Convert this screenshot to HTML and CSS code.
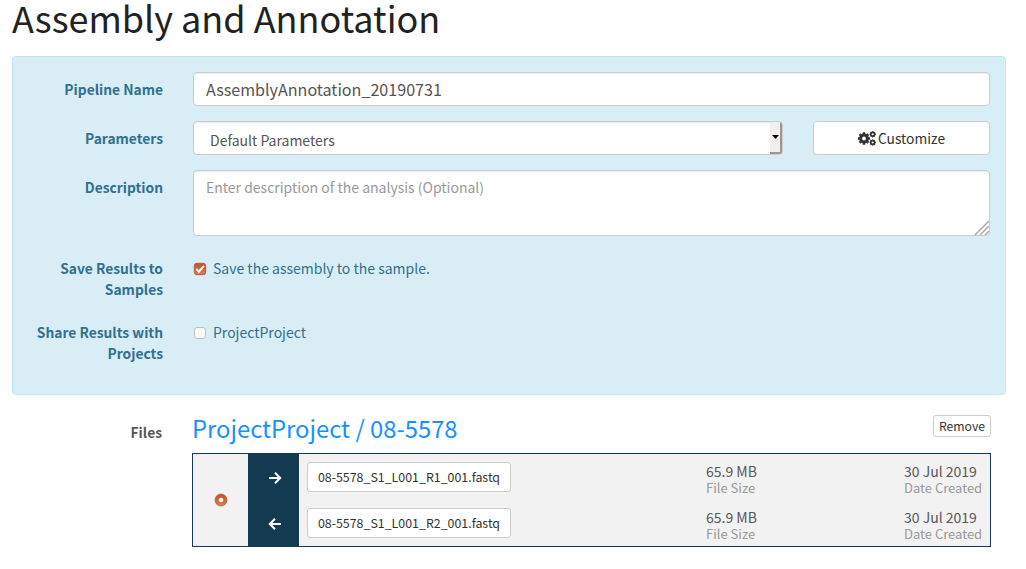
FILE: index.html
```html
<!DOCTYPE html>
<html lang="en">
<head>
<meta charset="utf-8">
<title>Assembly and Annotation</title>
<link rel="stylesheet" href="styles.css">
</head>
<body>
<main class="page">
  <h1 class="title">Assembly and Annotation</h1>
  <form class="panel">
    <div class="row row-name">
      <label class="label">Pipeline Name</label>
      <div class="control name-text">AssemblyAnnotation_20190731</div>
    </div>
    <div class="row row-params">
      <label class="label">Parameters</label>
      <div class="params">
        <div class="control select">
          <span class="select-text">Default Parameters</span>
          <span class="select-button"><svg width="7" height="4" viewBox="0 0 7 4"><path d="M0 0h7L3.5 4z" fill="#000"/></svg></span>
        </div>
        <div class="control customize">
          <svg class="cogs" width="18" height="15" viewBox="0 0 18 15" fill="none" stroke="#333">
            <circle cx="6" cy="7.5" r="3.4" stroke-width="3"/>
            <path d="M6 1.300v2M6 11.700v2M-.1 7.500h2M10.100 7.500h2M1.700 3.200L3 4.500M10.300 3.200L9 4.500M1.700 11.800L3 10.500M10.300 11.800L9 10.500" stroke-width="2.600"/>
            <circle cx="14.700" cy="3.300" r="1.900" stroke-width="1.700"/>
            <path d="M14.700 .2v1M14.700 5.400v1M11.600 3.300h1M16.800 3.300h1M12.500 1.100l.7.7M16.900 1.100l-.7.7M12.500 5.500l.7-.7M16.900 5.500l-.7-.7" stroke-width="1.300"/>
            <circle cx="14.700" cy="11.500" r="1.900" stroke-width="1.700"/>
            <path d="M14.700 8.400v1M14.700 13.600v1M11.600 11.500h1M16.800 11.500h1M12.500 9.300l.7.7M16.900 9.300l-.7.7M12.500 13.700l.7-.7M16.900 13.700l-.7-.7" stroke-width="1.300"/>
          </svg>
          <span>Customize</span>
        </div>
      </div>
    </div>
    <div class="row row-desc">
      <label class="label">Description</label>
      <div class="control textarea">
        <span class="placeholder">Enter description of the analysis (Optional)</span>
        <svg class="grip" width="15" height="15" viewBox="0 0 15 15"><path d="M1 15L15 1M6 15l9-9M11 15l4-4" stroke="#aaa" stroke-width="1.500"/></svg>
      </div>
    </div>
    <div class="row row-save">
      <label class="label">Save Results to Samples</label>
      <div class="check">
        <svg width="14" height="14" viewBox="0 0 14 14"><defs><linearGradient id="fill" x2="0" y2="1"><stop offset="0" stop-color="#ce4b21"/><stop offset="1" stop-color="#dd7c52"/></linearGradient></defs><rect x="1.300" y="1.300" width="11.400" height="11.400" rx="2.500" fill="url(#fill)" stroke="#a9583c" stroke-width=".9"/><path d="M3.300 7l2.600 2.700L11 3.900" fill="none" stroke="#fff" stroke-width="2"/></svg>
        <span class="save-text">Save the assembly to the sample.</span>
      </div>
    </div>
    <div class="row row-share">
      <label class="label">Share Results with Projects</label>
      <div class="check">
        <svg width="14" height="14" viewBox="0 0 14 14"><rect x="1.500" y="1.500" width="11" height="11" rx="2.500" fill="#f8f8f8" stroke="#c2c0be"/></svg>
        <span class="project-text">ProjectProject</span>
      </div>
    </div>
  </form>
  <section class="files">
    <div class="label files-label">Files</div>
    <div class="files-body">
      <header class="files-head">
        <h2 class="sample">ProjectProject / 08-5578</h2>
        <button class="remove" type="button">Remove</button>
      </header>
      <div class="pair">
        <div class="pick">
          <svg width="14" height="14" viewBox="0 0 14 14"><circle cx="7" cy="7" r="6" fill="url(#fill)" stroke="#b4623f" stroke-width=".8"/><circle cx="7" cy="7" r="2.300" fill="#fff"/></svg>
        </div>
        <div class="arrows">
          <svg width="14" height="14" viewBox="0 0 14 14"><path d="M1 7h11M7 1.800L12.200 7 7 12.200" fill="none" stroke="#fff" stroke-width="2"/></svg>
          <svg width="14" height="14" viewBox="0 0 14 14"><path d="M13 7H2M7 1.800L1.800 7 7 12.200" fill="none" stroke="#fff" stroke-width="2"/></svg>
        </div>
        <div class="list">
          <div class="file">
            <div class="cell"><span class="filename">08-5578_S1_L001_R1_001.fastq</span></div>
            <div class="meta"><div class="value">65.9 MB</div><div class="caption">File Size</div></div>
            <div class="meta"><div class="value">30 Jul 2019</div><div class="caption">Date Created</div></div>
          </div>
          <div class="file">
            <div class="cell"><span class="filename">08-5578_S1_L001_R2_001.fastq</span></div>
            <div class="meta"><div class="value">65.9 MB</div><div class="caption">File Size</div></div>
            <div class="meta"><div class="value">30 Jul 2019</div><div class="caption">Date Created</div></div>
          </div>
        </div>
      </div>
    </div>
  </section>
</main>
</body>
</html>
```
FILE: styles.css
```css
* { box-sizing: border-box; }
body {
  margin: 0;
  background: #fff;
  color: #58585a;
  font: 14px/21px "Noto Sans CJK SC", "Open Sans", sans-serif;
}
svg { display: block; flex: none; }
.page { width: 1006px; height: 569px; padding-left: 12px; }
.title { height: 56px; margin: 0; color: #222; font-size: 36px; font-weight: 400; line-height: 35px; white-space: nowrap; }
.panel {
  display: flex;
  flex-direction: column;
  height: 339px;
  padding: 15px;
  border: 1px solid #bce8f1;
  border-radius: 4px;
  background: #d9edf7;
  color: #31708f;
}
.row { display: grid; grid-template-columns: 135px 797px; column-gap: 30px; }
.row .label { padding-top: 7px; }
.label { font-size: 13.8px; font-weight: 700; text-align: right; }
.control {
  border: 1px solid #ccc;
  border-radius: 4px;
  background: #fff;
  box-shadow: inset 0 1px 1px rgba(0, 0, 0, .075);
  color: #555;
}
.row-name, .row-params { height: 49px; }
.name-text { height: 34px; padding-left: 12px; font-size: 16.1px; line-height: 32px; }
.params { display: grid; grid-template-columns: 590px 177px; column-gap: 30px; }
.select { display: flex; justify-content: space-between; height: 34px; padding-left: 16px; overflow: hidden; line-height: 36px; }
.select-button {
  display: flex;
  align-items: center;
  justify-content: center;
  width: 12px;
  border-right: 2px solid #999;
  border-bottom: 2px solid #999;
  background: #f1f0ef;
}
.customize { display: flex; align-items: center; justify-content: center; gap: 2px; height: 34px; box-shadow: none; color: #333; font-size: 13.8px; }
.row-desc { height: 82px; }
.textarea { display: flex; justify-content: space-between; height: 66px; padding: 6px 0 0 12px; }
.placeholder { color: #999; }
.grip { align-self: flex-end; }
.row-save { height: 64px; }
.row-save .label, .row-share .label { margin-left: -10px; padding-top: 6px; }
.check { display: flex; align-items: center; gap: 6px; height: 21px; margin-top: 6px; }
.files { display: grid; grid-template-columns: 150px 799px; column-gap: 30px; padding-top: 14px; }
.files-label { padding-top: 13px; }
.files-head { display: flex; justify-content: space-between; height: 44px; }
.sample { margin: 0; color: #1890ff; font-size: 23.8px; font-weight: 400; line-height: 38px; white-space: nowrap; }
.remove {
  width: 58px;
  height: 22px;
  margin-top: 6px;
  padding: 0;
  border: 1px solid #ccc;
  border-radius: 3px;
  background: #fff;
  color: #333;
  font: 12.2px/20px "Noto Sans CJK SC", sans-serif;
}
.pair { display: grid; grid-template-columns: 55px 51px 1fr; height: 94px; border: 1px solid #143a52; background: #f2f2f2; }
.pick { display: flex; align-items: center; justify-content: center; padding-bottom: 1px; }
.arrows { display: grid; grid-template-rows: 46px 46px; align-items: center; justify-items: center; padding: 1px 0 0 2px; background: #143a52; }
.file { display: grid; grid-template-columns: 407px 198px 1fr; height: 46px; }
.cell { padding: 8px 0 0 8px; }
.filename { display: block; width: 204px; height: 30px; border: 1px solid #ccc; border-radius: 3px; background: #fff; color: #333; font-size: 12.4px; line-height: 28px; text-align: center; white-space: nowrap; }
.meta { padding-top: 9px; white-space: nowrap; }
.value { height: 17px; line-height: 17px; }
.caption { color: #999; font-size: 13px; line-height: 16px; }
```
